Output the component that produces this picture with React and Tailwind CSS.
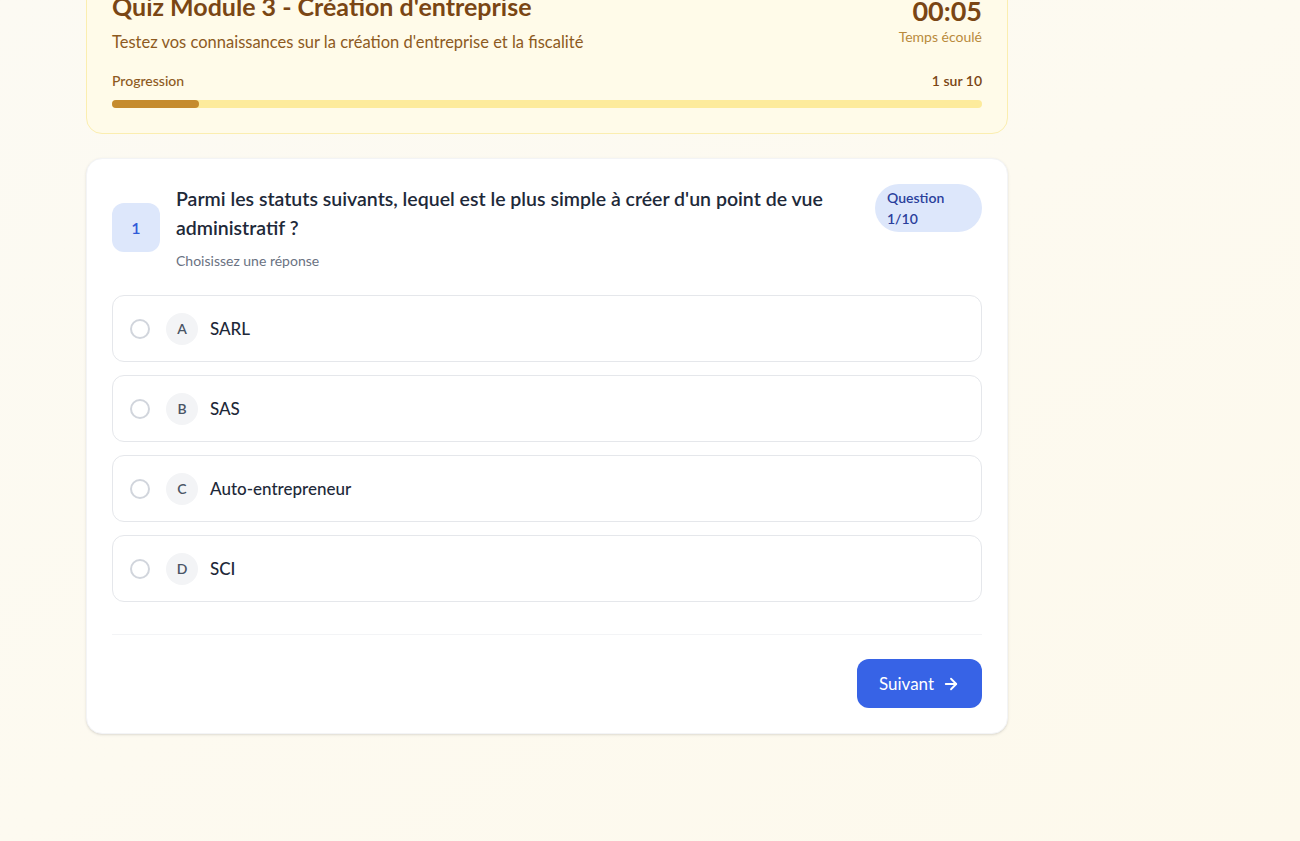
const options = [
  { letter: 'A', label: 'SARL' },
  { letter: 'B', label: 'SAS' },
  { letter: 'C', label: 'Auto-entrepreneur' },
  { letter: 'D', label: 'SCI' },
];

function ArrowRight() {
  return (
    <svg width="18" height="18" viewBox="0 0 24 24" fill="none" stroke="currentColor" strokeWidth="2.4" strokeLinecap="round" strokeLinejoin="round">
      <path d="M5 12h14" />
      <path d="m12 5 7 7-7 7" />
    </svg>
  );
}

export default function App() {
  return (
    <div
      className="min-h-[841px] h-[841px] overflow-hidden bg-gradient-to-br from-[#fcfaf3] via-[#fdfaf0] to-[#fdf9ec]"
      style={{ fontFamily: 'Lato, "Noto Sans", sans-serif' }}
    >
      <div className="pl-[86px] w-[1008px] -mt-[35px] flex flex-col gap-6">
        {/* Header card */}
        <div className="rounded-2xl border border-[#fbeeb0] bg-[#fffbe9] px-[25px] pt-[24px] pb-[25px]">
          <div className="flex items-start justify-between">
            <div>
              <h1 className="text-[25px] leading-8 font-bold text-[#7a4614]">Quiz Module 3 - Création d'entreprise</h1>
              <p className="mt-[8px] text-[16.5px] leading-6 text-[#8d5a1e]">Testez vos connaissances sur la création d'entreprise et la fiscalité</p>
            </div>
            <div className="text-right pt-[5px]">
              <div className="text-[27px] leading-8 font-bold text-[#7a4614]">00:05</div>
              <div className="text-sm leading-5 text-[#b98a3c]">Temps écoulé</div>
            </div>
          </div>
          <div className="mt-[17px] flex items-center justify-between text-sm leading-5 font-semibold text-[#8d5a1e]">
            <span className="font-medium">Progression</span>
            <span className="text-[#7a4614]">1 sur 10</span>
          </div>
          <div className="mt-[9px] h-2 w-full rounded-full bg-[#fdeb9c]">
            <div className="h-2 rounded-full bg-[#c58b2e]" style={{ width: '10%' }} />
          </div>
        </div>

        {/* Question card */}
        <div className="rounded-2xl border border-gray-100 bg-white p-[25px] shadow-sm">
          <div className="flex items-start justify-between gap-6">
            <div className="flex items-center gap-4">
              <div className="flex h-[49px] w-[48px] shrink-0 items-center justify-center rounded-xl bg-[#dde7fb] text-base font-semibold text-[#2f5bd8]">
                1
              </div>
              <div>
                <h2 className="max-w-[660px] text-[19.5px] leading-[29px] font-semibold text-gray-800">
                  Parmi les statuts suivants, lequel est le plus simple à créer d'un point de vue administratif ?
                </h2>
                <p className="mt-[9px] text-sm leading-5 text-gray-500">Choisissez une réponse</p>
              </div>
            </div>
            <div className="w-[107px] shrink-0 rounded-full bg-[#dde7fb] px-3 py-[3px] text-sm leading-[21px] font-semibold text-[#2a3f9c]">
              Question 1/10
            </div>
          </div>

          <div className="mt-6 flex flex-col gap-[13px]">
            {options.map((o) => (
              <div key={o.letter} className="flex h-[67px] items-center rounded-xl border border-gray-200 bg-white px-[17px]">
                <span className="h-5 w-5 shrink-0 rounded-full border-2 border-gray-300" />
                <span className="ml-4 flex h-8 w-8 shrink-0 items-center justify-center rounded-full bg-gray-100 text-sm font-semibold text-gray-600">
                  {o.letter}
                </span>
                <span className="ml-3 text-[17px] font-medium text-gray-800">{o.label}</span>
              </div>
            ))}
          </div>

          <div className="mt-8 border-t border-gray-100 pt-6 flex justify-end">
            <button className="flex h-[49px] w-[125px] items-center justify-center gap-2 rounded-xl bg-[#3763e6] text-[17px] text-white">
              Suivant
              <ArrowRight />
            </button>
          </div>
        </div>
      </div>
    </div>
  );
}
